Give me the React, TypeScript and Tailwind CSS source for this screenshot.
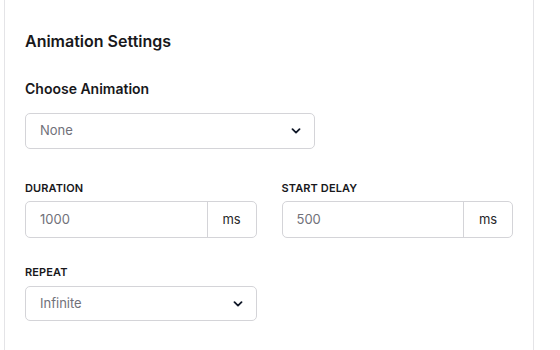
function Chevron() {
  return (
    <svg width="10" height="6" viewBox="0 0 10 6" fill="none" className="text-gray-900">
      <path d="M1.5 1.2 5 4.6 8.5 1.2" stroke="currentColor" strokeWidth="1.8" strokeLinecap="round" strokeLinejoin="round" />
    </svg>
  );
}

function SelectBox({ value, className = '' }: { value: string; className?: string }) {
  return (
    <div
      className={`h-9 flex items-center justify-between pl-[14px] pr-[13px] border border-[#d4d4d8] rounded-[5px] bg-white ${className}`}
    >
      <span className="text-[13px] text-[#71717a]">{value}</span>
      <Chevron />
    </div>
  );
}

function UnitInput({ value, unit }: { value: string; unit: string }) {
  return (
    <div className="h-[37px] flex border border-[#d4d4d8] rounded-[5px] bg-white overflow-hidden">
      <div className="flex-1 flex items-center pl-[14px] text-[13px] text-[#71717a]">{value}</div>
      <div className="w-[49px] flex items-center justify-center border-l border-[#d4d4d8] text-[13px] text-[#27272a]">
        {unit}
      </div>
    </div>
  );
}

function FieldLabel({ children }: { children: string }) {
  return (
    <div className="text-[11px] leading-4 font-semibold uppercase tracking-[0.01em] text-[#18181b]">
      {children}
    </div>
  );
}

export default function App() {
  return (
    <div
      className="w-[560px] h-[350px] bg-white pl-[4px] overflow-hidden"
      style={{ fontFamily: 'Inter, "Noto Sans", sans-serif' }}
    >
      <div className="w-[530px] h-full border-x border-[#e4e4e7] px-5 pt-[29px]">
        <h2 className="text-base leading-6 font-semibold text-[#18181b]">Animation Settings</h2>

        <div className="mt-[26px]">
          <div className="text-sm leading-5 font-semibold text-[#18181b]">Choose Animation</div>
          <SelectBox value="None" className="w-[290px] mt-[14px]" />
        </div>

        <div className="grid grid-cols-2 gap-x-[25px] mt-[31px]">
          <div>
            <FieldLabel>Duration</FieldLabel>
            <div className="mt-[5px]">
              <UnitInput value="1000" unit="ms" />
            </div>
          </div>
          <div>
            <FieldLabel>Start Delay</FieldLabel>
            <div className="mt-[5px]">
              <UnitInput value="500" unit="ms" />
            </div>
          </div>
        </div>

        <div className="grid grid-cols-2 gap-x-[25px] mt-[26px]">
          <div>
            <FieldLabel>Repeat</FieldLabel>
            <SelectBox value="Infinite" className="mt-[6px] h-[35px]" />
          </div>
        </div>
      </div>
    </div>
  );
}
